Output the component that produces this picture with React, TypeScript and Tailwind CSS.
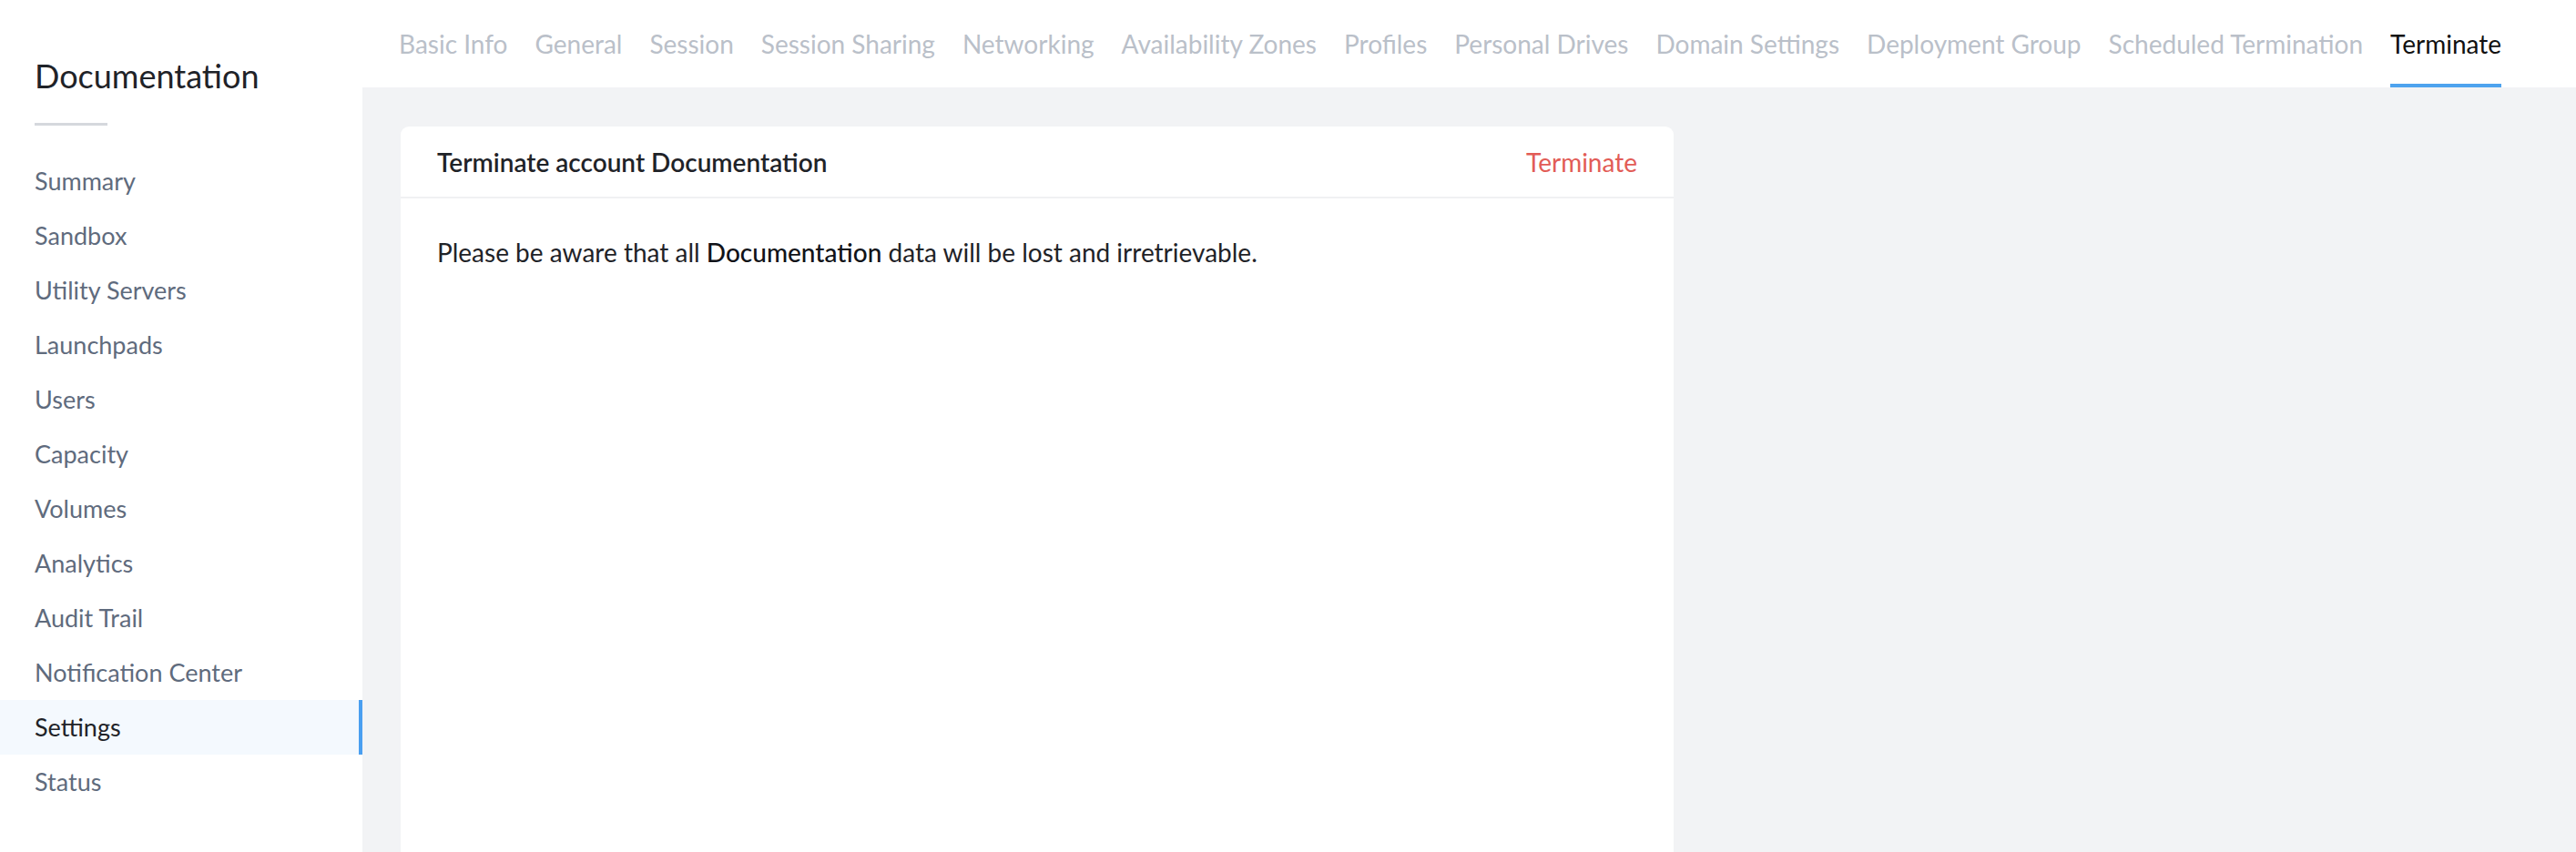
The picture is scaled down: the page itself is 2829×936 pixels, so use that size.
import React from 'react';

const navItems = [
  'Summary',
  'Sandbox',
  'Utility Servers',
  'Launchpads',
  'Users',
  'Capacity',
  'Volumes',
  'Analytics',
  'Audit Trail',
  'Notification Center',
  'Settings',
  'Status',
];

const tabs = [
  'Basic Info',
  'General',
  'Session',
  'Session Sharing',
  'Networking',
  'Availability Zones',
  'Profiles',
  'Personal Drives',
  'Domain Settings',
  'Deployment Group',
  'Scheduled Termination',
  'Terminate',
];

export default function App() {
  const activeNav = 'Settings';
  const activeTab = 'Terminate';

  return (
    <div className="flex h-[936px] w-full overflow-hidden bg-[#f2f3f5] font-['Lato',sans-serif]">
      <aside className="w-[398px] shrink-0 h-full bg-white">
        <div className="pl-[38px] pt-[56px]">
          <h1 className="text-[36px] leading-[54px] text-[#1f2328] font-normal">Documentation</h1>
          <div className="mt-[25px] h-[3px] w-[80px] bg-[#d5d8dd]" />
        </div>
        <ul className="mt-[31px]">
          {navItems.map((item) => (
            <li
              key={item}
              className={`flex h-[60px] items-center pl-[38px] text-[27px] ${
                item === activeNav
                  ? 'bg-[#f4f9fe] text-[#1f2328] border-r-4 border-[#4a9ff0]'
                  : 'text-[#5f6b7d]'
              }`}
            >
              {item}
            </li>
          ))}
        </ul>
      </aside>

      <div className="flex flex-1 flex-col min-w-0">
        <nav className="flex h-[96px] shrink-0 gap-[30px] bg-white pl-[40px]">
          {tabs.map((tab) => (
            <div key={tab} className="flex h-full flex-col">
              <span
                className={`mt-[28px] text-[28px] leading-[40px] whitespace-nowrap ${
                  tab === activeTab ? 'text-[#111111]' : 'text-[#bac0c9]'
                }`}
              >
                {tab}
              </span>
              <div className={`mt-auto h-[4px] w-full ${tab === activeTab ? 'bg-[#4ea3ee]' : ''}`} />
            </div>
          ))}
        </nav>

        <main className="flex-1 pl-[42px] pt-[43px]">
          <div className="h-full w-[1398px] rounded-t-[9px] bg-white">
            <div className="flex h-[79px] items-center justify-between border-b-2 border-[#f0f1f3] px-[40px]">
              <h2 className="text-[28px] font-semibold text-[#1f2328]">Terminate account Documentation</h2>
              <button className="text-[28px] text-[#e25c56]">Terminate</button>
            </div>
            <div className="px-[40px] pt-[39px]">
              <p className="text-[28px] leading-[40px] text-[#1f2328]">
                Please be aware that all <span className="font-medium text-[#111318]">Documentation</span> data will be lost and irretrievable.
              </p>
            </div>
          </div>
        </main>
      </div>
    </div>
  );
}
